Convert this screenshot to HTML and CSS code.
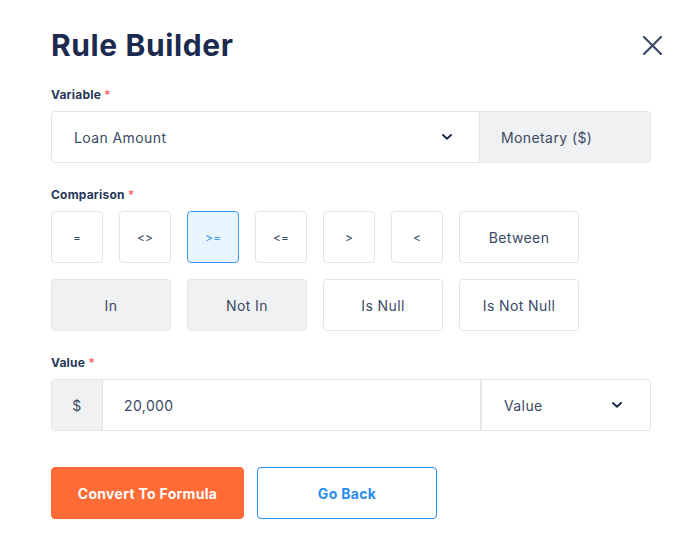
FILE: index.html
```html
<!DOCTYPE html>
<html lang="en">
<head>
<meta charset="utf-8">
<title>Rule Builder</title>
<link rel="stylesheet" href="styles.css">
</head>
<body>
<div class="modal">
  <div class="header">
    <h1 class="title">Rule Builder</h1>
    <button class="close" aria-label="Close">
      <svg width="19" height="19" viewBox="0 0 19 19"><path d="M1 1 L18 18 M18 1 L1 18" stroke="#3b4a66" stroke-width="2.2" stroke-linecap="round" fill="none"/></svg>
    </button>
  </div>

  <div class="label">Variable <span class="req">*</span></div>
  <div class="field">
    <div class="select">
      <span class="select-text">Loan Amount</span>
      <svg class="chev" width="10" height="6" viewBox="0 0 10 6"><path d="M1 1 L5 4.8 L9 1" stroke="#1b2a4e" stroke-width="1.9" fill="none" stroke-linecap="round" stroke-linejoin="round"/></svg>
    </div>
    <div class="addon-right">Monetary ($)</div>
  </div>

  <div class="label">Comparison <span class="req">*</span></div>
  <div class="ops">
    <button class="op">=</button>
    <button class="op">&lt;&gt;</button>
    <button class="op active">&gt;=</button>
    <button class="op">&lt;=</button>
    <button class="op">&gt;</button>
    <button class="op">&lt;</button>
    <button class="op wide">Between</button>
    <button class="op wide gray">In</button>
    <button class="op wide gray">Not In</button>
    <button class="op wide">Is Null</button>
    <button class="op wide">Is Not Null</button>
  </div>

  <div class="label">Value <span class="req">*</span></div>
  <div class="field">
    <div class="addon-left">$</div>
    <div class="input-text">20,000</div>
    <div class="select-right">
      <span>Value</span>
      <svg class="chev" width="10" height="6" viewBox="0 0 10 6"><path d="M1 1 L5 4.8 L9 1" stroke="#1b2a4e" stroke-width="1.9" fill="none" stroke-linecap="round" stroke-linejoin="round"/></svg>
    </div>
  </div>

  <div class="actions">
    <button class="btn primary">Convert To Formula</button>
    <button class="btn outline">Go Back</button>
  </div>
</div>
</body>
</html>
```

FILE: styles.css
```css
* { box-sizing: border-box; }
html, body { margin: 0; padding: 0; background: #ffffff; }
body {
  font-family: Inter, "Open Sans", sans-serif;
  color: #3a4a66;
  letter-spacing: 0.4px;
}
.modal {
  width: 697px;
  padding: 27px 35px 0 51px;
}
.header {
  display: flex;
  align-items: center;
  justify-content: space-between;
  height: 36px;
}
.title {
  margin: 0;
  font-size: 30px;
  line-height: 36px;
  font-weight: 700;
  color: #1b2a4e;
  letter-spacing: 0.6px;
}
.close {
  border: 0;
  background: none;
  padding: 0;
  width: 19px;
  height: 19px;
  display: flex;
}
.label {
  margin-top: 24px;
  margin-bottom: 8px;
  font-size: 12px;
  line-height: 16px;
  font-weight: 700;
  color: #253858;
  letter-spacing: 0.2px;
}
.req { color: #f26b6b; }
.field {
  display: flex;
  width: 600px;
  height: 52px;
  border: 1px solid #e3e5ea;
  border-radius: 4px;
  overflow: hidden;
  font-size: 14px;
}
.select {
  flex: 1;
  display: flex;
  align-items: center;
  justify-content: space-between;
  padding: 0 27px 0 22px;
}
.chev { display: block; }
.addon-right {
  width: 171px;
  background: #f0f1f3;
  border-left: 1px solid #e3e5ea;
  display: flex;
  align-items: center;
  padding-left: 21px;
}
.ops {
  display: grid;
  grid-template-columns: repeat(8, 52px);
  grid-auto-rows: 52px;
  gap: 16px;
}
.op {
  grid-column: span 1;
  border: 1px solid #e3e5ea;
  border-radius: 4px;
  background: #ffffff;
  font-family: inherit;
  font-size: 12px;
  color: #3a4a66;
  letter-spacing: 0;
  padding: 0;
}
.op.wide { grid-column: span 2; font-size: 14px; letter-spacing: 0.4px; }
.op.gray { background: #f0f1f3; }
.op.active {
  border-color: #3d9bf3;
  background: #e8f4fe;
  color: #3d9bf3;
}
.addon-left {
  width: 51px;
  background: #f0f1f3;
  border-right: 1px solid #e3e5ea;
  display: flex;
  align-items: center;
  justify-content: center;
}
.input-text {
  flex: 1;
  display: flex;
  align-items: center;
  padding-left: 21px;
}
.select-right {
  width: 170px;
  border-left: 2px solid #e6e8ec;
  display: flex;
  align-items: center;
  justify-content: space-between;
  padding: 0 28px 0 22px;
}
.actions {
  display: flex;
  gap: 13px;
  margin-top: 36px;
}
.btn {
  height: 52px;
  border-radius: 4px;
  font-family: inherit;
  font-size: 14px;
  font-weight: 700;
  letter-spacing: 0.3px;
  padding: 0;
}
.btn.primary {
  width: 193px;
  background: #ff6b35;
  border: 1px solid #ff6b35;
  color: #ffffff;
}
.btn.outline {
  width: 180px;
  background: #ffffff;
  border: 1px solid #2a8cf0;
  color: #2a8cf0;
}
```
